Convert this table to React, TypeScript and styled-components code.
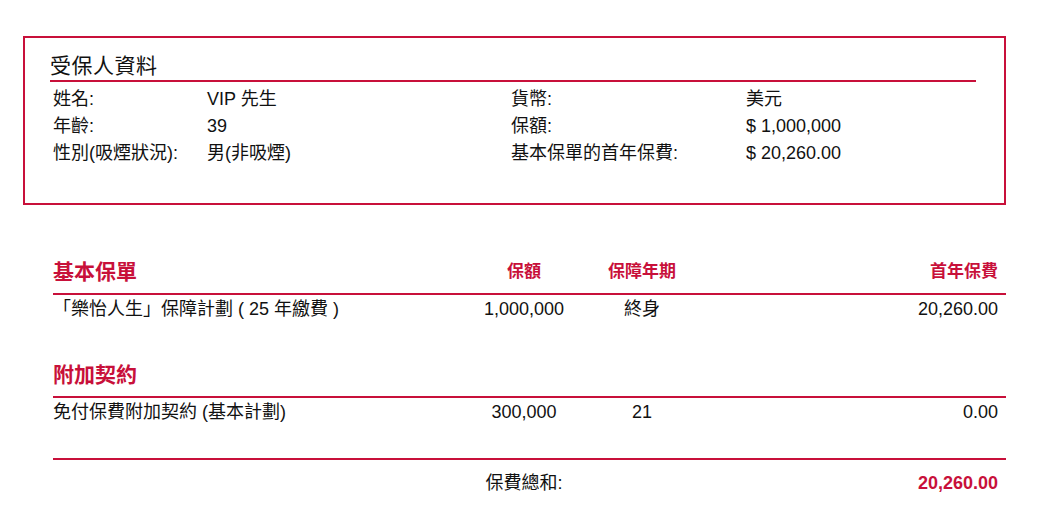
import React from "react";
import styled, { createGlobalStyle } from "styled-components";

const RED = "#c8103a";

const GlobalStyle = createGlobalStyle`
  body {
    margin: 0;
    background: #fff;
    font-family: "Liberation Sans", "Noto Sans CJK TC", sans-serif;
    color: #111;
  }
`;

const insured = [
  ["姓名:", "VIP 先生", "貨幣:", "美元"],
  ["年齡:", "39", "保額:", "$ 1,000,000"],
  ["性別(吸煙狀況):", "男(非吸煙)", "基本保單的首年保費:", "$ 20,260.00"],
];

const App = () => (
  <Page>
    <GlobalStyle />
    <InfoBox>
      <BoxTitle>受保人資料</BoxTitle>
      <InfoGrid>
        {insured.map((row) =>
          row.map((cell, i) => <InfoCell key={row[0] + i}>{cell}</InfoCell>)
        )}
      </InfoGrid>
    </InfoBox>

    <Plans>
      <HeadRow>
        <SectionTitle>基本保單</SectionTitle>
        <ColHead>保額</ColHead>
        <ColHead>保障年期</ColHead>
        <ColHead $right>首年保費</ColHead>
      </HeadRow>
      <DataRow>
        <Cell>「樂怡人生」保障計劃 ( 25 年繳費 )</Cell>
        <Cell $center>1,000,000</Cell>
        <Cell $center>終身</Cell>
        <Cell $right>20,260.00</Cell>
      </DataRow>

      <HeadRow $gap>
        <SectionTitle>附加契約</SectionTitle>
      </HeadRow>
      <DataRow>
        <Cell>免付保費附加契約 (基本計劃)</Cell>
        <Cell $center>300,000</Cell>
        <Cell $center>21</Cell>
        <Cell $right>0.00</Cell>
      </DataRow>

      <TotalRow>
        <Cell />
        <Cell $center>保費總和:</Cell>
        <Cell />
        <Cell $right $total>20,260.00</Cell>
      </TotalRow>
    </Plans>
  </Page>
);

const Page = styled.div`
  padding-top: 36px;
  width: 1043px;
  height: 509px;
  box-sizing: border-box;
`;

const InfoBox = styled.section`
  box-sizing: border-box;
  margin-left: 23px;
  width: 983px;
  height: 169px;
  border: 2px solid ${RED};
  padding: 16px 28px 0 25px;
`;

const BoxTitle = styled.h2`
  margin: 0;
  font-size: 21px;
  font-weight: normal;
  line-height: 24px;
  padding-bottom: 2px;
  border-bottom: 2px solid ${RED};
  letter-spacing: 0.5px;
`;

const InfoGrid = styled.div`
  display: grid;
  grid-template-columns: 154px 304px 235px 1fr;
  padding: 4px 0 0 3px;
  font-size: 18px;
  line-height: 27px;
`;

const InfoCell = styled.div`
  white-space: nowrap;
`;

const Plans = styled.section`
  margin: 52px 0 0 53px;
  width: 953px;
`;

const cols = `
  display: grid;
  grid-template-columns: 416px 110px 126px 1fr;
  align-items: center;
`;

const HeadRow = styled.div<{ $gap?: boolean }>`
  ${cols}
  height: 36px;
  margin-top: ${(p) => (p.$gap ? "37px" : "0")};
  padding-bottom: 6px;
  box-sizing: content-box;
  border-bottom: 2px solid ${RED};
  line-height: 30px;
  height: 30px;
`;

const SectionTitle = styled.h3`
  margin: 0;
  font-size: 21px;
  font-weight: bold;
  color: ${RED};
  white-space: nowrap;
`;

const ColHead = styled.div<{ $right?: boolean }>`
  font-size: 17px;
  font-weight: bold;
  color: ${RED};
  text-align: ${(p) => (p.$right ? "right" : "center")};
  padding-right: ${(p) => (p.$right ? "8px" : "0")};
  white-space: nowrap;
`;

const DataRow = styled.div`
  ${cols}
  font-size: 18px;
  line-height: 28px;
`;

const Cell = styled.div<{ $center?: boolean; $right?: boolean; $total?: boolean }>`
  white-space: nowrap;
  text-align: ${(p) => (p.$right ? "right" : p.$center ? "center" : "left")};
  padding-right: ${(p) => (p.$right ? "8px" : "0")};
  color: ${(p) => (p.$total ? RED : "inherit")};
  font-weight: ${(p) => (p.$total ? "bold" : "normal")};
`;

const TotalRow = styled.div`
  ${cols}
  margin-top: 32px;
  border-top: 2px solid ${RED};
  padding-top: 9px;
  font-size: 18px;
  line-height: 28px;
`;

export default App;
